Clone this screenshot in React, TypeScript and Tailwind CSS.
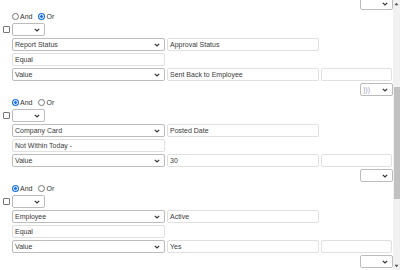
type Group = {
  op: "and" | "or";
  field: string;
  fieldValue: string;
  operator: string;
  value: string;
  close: string;
};

const groups: Group[] = [
  {
    op: "or",
    field: "Report Status",
    fieldValue: "Approval Status",
    operator: "Equal",
    value: "Sent Back to Employee",
    close: ")))",
  },
  {
    op: "and",
    field: "Company Card",
    fieldValue: "Posted Date",
    operator: "Not Within Today -",
    value: "30",
    close: "",
  },
  {
    op: "and",
    field: "Employee",
    fieldValue: "Active",
    operator: "Equal",
    value: "Yes",
    close: "",
  },
];

function Chevron() {
  return (
    <svg width="6" height="4" viewBox="0 0 6 4" className="shrink-0">
      <path d="M0.8 0.8 L3 3 L5.2 0.8" fill="none" stroke="#333" strokeWidth="1.2" />
    </svg>
  );
}

function Select({ text = "", className = "", muted = false }: { text?: string; className?: string; muted?: boolean }) {
  return (
    <div
      className={
        "flex items-center justify-between h-[13px] border border-[#bcbcbc] rounded-[2px] bg-white pl-[2px] pr-[4px] " +
        className
      }
    >
      <span className={"text-[7px] leading-none " + (muted ? "text-[#9a98b8]" : "text-[#3a3a3a]")}>{text}</span>
      <Chevron />
    </div>
  );
}

function Input({ text = "", className = "" }: { text?: string; className?: string }) {
  return (
    <div
      className={
        "flex items-center h-[13px] border border-[#e0e0e0] rounded-[2px] bg-white pl-[2px] " + className
      }
    >
      <span className="text-[7px] leading-none text-[#3a3a3a]">{text}</span>
    </div>
  );
}

function Radio({ checked, label }: { checked: boolean; label: string }) {
  return (
    <label className="flex items-center gap-[1px]">
      {checked ? (
        <span className="flex items-center justify-center w-[7px] h-[7px] rounded-full bg-[#1a73e8]">
          <span className="w-[5px] h-[5px] rounded-full border border-white bg-[#1a73e8]" />
        </span>
      ) : (
        <span className="w-[7px] h-[7px] rounded-full border border-[#767676] bg-white" />
      )}
      <span className="text-[7px] leading-none text-[#333]">{label}</span>
    </label>
  );
}

function Scrollbar() {
  return (
    <div className="w-[7px] h-[270px] bg-[#f1f1f1] flex flex-col items-center">
      <svg width="5" height="4" viewBox="0 0 5 4" className="mt-[2px]">
        <path d="M2.5 0.8 L4.5 3.2 L0.5 3.2 Z" fill="#505050" />
      </svg>
      <div className="w-[6px] h-[112px] mt-[81px] bg-[#c1c1c1]" />
      <div className="flex-1" />
      <svg width="5" height="4" viewBox="0 0 5 4" className="mb-[2px]">
        <path d="M0.5 0.8 L4.5 0.8 L2.5 3.2 Z" fill="#505050" />
      </svg>
    </div>
  );
}

export default function App() {
  return (
    <div className="flex w-[400px] h-[270px] overflow-hidden bg-white font-['Liberation_Sans',Arial,sans-serif]">
      <div className="w-[393px] flex flex-col">
        {/* tail of previous group */}
        <div className="flex justify-end mt-[-3px]">
          <Select className="w-[33px]" />
        </div>

        {groups.map((g, idx) => (
          <div key={idx} className="flex flex-col">
            <div className="flex items-center h-[12px] pl-[12px] gap-[6px]">
              <Radio checked={g.op === "and"} label="And" />
              <Radio checked={g.op === "or"} label="Or" />
            </div>

            <div className="flex items-center mt-[1px] pl-[3px] gap-[2px]">
              <span className="w-[7px] h-[7px] border border-[#767676] rounded-[1px] bg-white" />
              <Select className="w-[33px]" />
            </div>

            <div className="flex flex-col gap-[2px] mt-[2px] pl-[12px]">
              <div className="flex gap-[2px]">
                <Select text={g.field} className="w-[153px]" />
                <Input text={g.fieldValue} className="w-[152px]" />
              </div>
              <div className="flex">
                <Input text={g.operator} className="w-[153px]" />
              </div>
              <div className="flex gap-[2px]">
                <Select text="Value" className="w-[153px]" />
                <Input text={g.value} className="w-[152px]" />
                <Input className="w-[71px]" />
              </div>
            </div>

            <div className="flex justify-end mt-[2px]">
              <Select text={g.close} muted className="w-[33px]" />
            </div>
          </div>
        ))}
      </div>
      <Scrollbar />
    </div>
  );
}
